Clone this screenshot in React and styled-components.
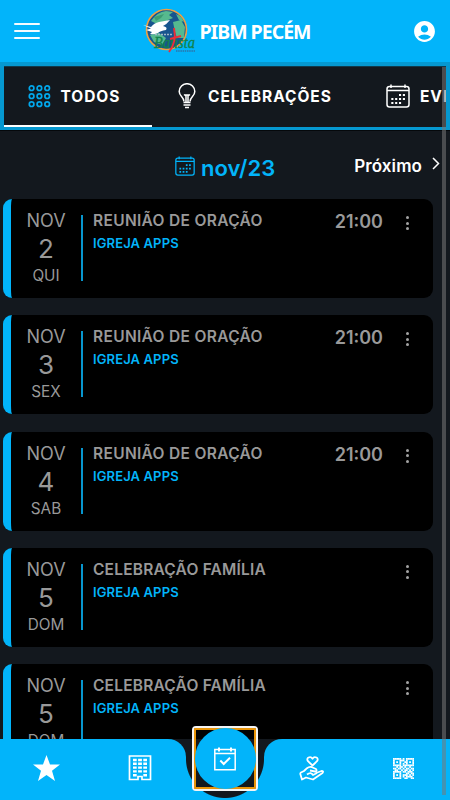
import React from 'react';
import styled, { createGlobalStyle } from 'styled-components';
import { MdAccountCircle } from 'react-icons/md';

const GlobalStyle = createGlobalStyle`
  * {
    box-sizing: border-box;
  }
  body {
    margin: 0;
    overflow: hidden;
    background: #13181e;
    font-family: Inter, 'Noto Sans', sans-serif;
  }
`;

const Screen = styled.div`
  position: relative;
  width: 450px;
  height: 800px;
  overflow: hidden;
  display: flex;
  flex-direction: column;
  background: #13181e;
`;

const Header = styled.header`
  flex: none;
  height: 62px;
  padding: 0 13px 0 14px;
  display: flex;
  align-items: center;
  justify-content: space-between;
  background: #02b4fa;
  color: white;
`;

const MenuButton = styled.div`
  width: 26px;
  height: 16px;
  display: flex;
  flex-direction: column;
  justify-content: space-between;
`;

const MenuLine = styled.span`
  height: 2px;
  border-radius: 1px;
  background: #f4fbff;
`;

const Brand = styled.div`
  display: flex;
  align-items: center;
  gap: 4px;
`;

const BrandName = styled.h1`
  margin: 2px 0 0;
  font-family: 'Noto Sans', sans-serif;
  font-size: 19.5px;
  line-height: 26px;
  font-weight: 700;
  letter-spacing: -1px;
  white-space: nowrap;
`;

const Tabs = styled.nav`
  flex: none;
  height: 69px;
  padding: 4px 4px 3px;
  background: #0598d1;
  border-bottom: 1px solid #05080b;
`;

const TabList = styled.div`
  height: 61px;
  display: flex;
  overflow: hidden;
  background: #13181e;
  border-top: 1px solid #10394b;
`;

const Tab = styled.div`
  flex: none;
  width: ${props => props.width}px;
  height: 60px;
  padding-left: ${props => props.inset}px;
  display: flex;
  align-items: center;
  gap: ${props => props.gap}px;
  color: white;
  font-size: 15.5px;
  font-weight: 700;
  letter-spacing: 0.95px;
  white-space: nowrap;
  border-bottom: 2px solid ${props => props.selected ? 'white' : 'transparent'};
`;

const Month = styled.div`
  flex: none;
  height: 68px;
  padding: 1px 10px 0 175px;
  display: flex;
  align-items: center;
  color: #02b4fa;
`;

const MonthName = styled.div`
  margin: 5px 0 0 6px;
  width: 76px;
  font-size: 22px;
  font-weight: 600;
  white-space: nowrap;
`;

const Next = styled.div`
  margin: 1px 0 0 auto;
  display: flex;
  align-items: center;
  gap: 9px;
  color: white;
  font-size: 17px;
  font-weight: 600;
  letter-spacing: 0.1px;

  svg {
    margin-top: -6px;
  }
`;

const List = styled.main`
  flex: 1;
  min-height: 0;
  overflow: hidden;
  padding-left: 3px;
`;

const Card = styled.article`
  width: 430px;
  height: 99px;
  margin-bottom: 17.3px;
  padding: 11px 18px 0 11px;
  display: flex;
  background: black;
  border-left: 8px solid #02b4fa;
  border-radius: 9px;
  color: #999;
`;

const DateBox = styled.div`
  width: 48px;
  display: flex;
  flex-direction: column;
  align-items: center;
`;

const DateName = styled.span`
  font-size: ${props => props.size}px;
  line-height: 22px;
`;

const Day = styled.span`
  font-size: 26px;
  line-height: 33px;
`;

const Divider = styled.div`
  width: 2px;
  height: 66px;
  margin: 5px 10px 0 11px;
  background: #0796ce;
`;

const Details = styled.div`
  flex: 1;
`;

const Title = styled.h2`
  margin: 1px 0 0;
  font-size: 15.5px;
  line-height: 20px;
  font-weight: 600;
  letter-spacing: ${props => props.spacing}px;
  white-space: nowrap;
`;

const Place = styled.div`
  margin-top: 3px;
  color: #02b4fa;
  font-size: 13px;
  line-height: 18px;
  font-weight: 600;
  letter-spacing: 0.12px;
`;

const Time = styled.time`
  margin-top: 1px;
  font-size: 18px;
  line-height: 22px;
  font-weight: 600;
`;

const More = styled.div`
  width: 3px;
  height: 14px;
  margin: 6px 6px 0 23px;
  display: flex;
  flex-direction: column;
  justify-content: space-between;
  align-items: center;
`;

const Dot = styled.span`
  width: 3px;
  height: 3px;
  border-radius: 50%;
  background: #a3a3a3;
`;

const BottomBar = styled.nav`
  flex: none;
  position: relative;
  height: 61px;
  display: grid;
  grid-template-columns: 186px 78px 186px;
  background: #13181e;
`;

const Side = styled.div`
  display: flex;
  align-items: center;
  justify-content: space-between;
  padding: ${props => props.right ? '0 36px 3px 35px' : '0 34px 3px 33px'};
  color: white;
  background: #02b4fa;
  border-radius: ${props => props.right ? '18px 0 0 0' : '0 18px 0 0'};
`;

const Notch = styled.div`
  height: 41px;
  margin-top: 20px;
  background: radial-gradient(circle at 39px 0, #13181e 38.5px, #02b4fa 39.5px);
`;

const FocusFrame = styled.div`
  position: absolute;
  left: 192px;
  bottom: 9px;
  width: 66px;
  height: 65px;
  display: flex;
  border: 2px solid #f5f5f5;
  border-radius: 4px;
  background: linear-gradient(#020304 11px, #13181e 11px);
`;

const FocusLine = styled.div`
  flex: 1;
  display: flex;
  border: 2px solid #e99509;
  border-radius: 1px;
`;

const AgendaButton = styled.div`
  flex: none;
  width: 61px;
  height: 61px;
  margin: -2px -1.5px;
  display: flex;
  align-items: center;
  justify-content: center;
  color: white;
  background: #02b4fa;
  border-radius: 50%;
`;

const Scrollbar = styled.div`
  position: absolute;
  left: 442px;
  top: 67px;
  width: 4px;
  height: 728px;
  background: rgba(120, 120, 120, 0.55);
`;

const Logo = () => (
  <svg width="54" height="46" viewBox="0 0 54 46">
    <circle cx="24.5" cy="21.5" r="20" fill="#18558e" stroke="#eda044" strokeWidth="1.6" />
    <path d="M9 13Q15 4 24 3L31 4 27 7 31 10 26 12 22 16 15 16zM31 14L39 12 43 19 42 30 35 30 33 24zM34 6Q40 8 42 14L37 12zM8 27L17 25 24 30 20 37 12 34z" fill="#56b98f" />
    <path d="M12 9L22 6 19 10 14 13z" fill="#3d9c72" />
    <path d="M1 17L9 19Q12 15 17 14L28 12Q25 16 21 18Q26 19 24 22Q18 23 16 25Q12 27 8 26L10 24 4 22 9 20.5z" fill="white" />
    <path d="M13 26.5H31" stroke="#a0b8c8" strokeWidth="1.3" strokeDasharray="2 1" />
    <text x="12" y="40" textLength="41" lengthAdjust="spacingAndGlyphs" fontFamily="Liberation Serif, serif" fontStyle="italic" fontSize="16" fill="#12824b" stroke="#12824b" strokeWidth="0.3">Batista</text>
    <path d="M32 20Q35 34 27 44M28 31L39 28" fill="none" stroke="#ed2e38" strokeWidth="1.9" />
    <path d="M34 43H53" stroke="#2c73a9" strokeWidth="1.3" strokeDasharray="1.5 0.7" />
  </svg>
);

const GridIcon = () => (
  <svg width="23" height="23" viewBox="0 0 23 23" fill="none" stroke="#02a8ed" strokeWidth="1.7">
    {[3.2, 11.2, 19.2].map(y => [3.6, 11.4, 19.2].map(x => <circle key={`${x}-${y}`} cx={x} cy={y} r="2.3" />))}
  </svg>
);

const BulbIcon = () => (
  <svg width="18" height="26" viewBox="0 0 18 26" fill="none" stroke="white" strokeWidth="1.5">
    <path d="M6 18.5C6 14 1.2 13.5 1.2 8.5A7.7 7.7 0 0 1 16.8 8.5C16.8 13.5 12 14 12 18.5" />
    <path d="M8 19V13L6 11.5M10 19V13L12 11.5M6.5 12H11.5M5.5 19.5H12.5M5.5 22H12.5M7 24.5H11" />
  </svg>
);

const CalendarIcon = ({ size }) => (
  <svg width={size} height={size} viewBox="0 0 24 24" fill="none" stroke="currentColor" strokeWidth="1.5">
    <rect x="1" y="2.5" width="22" height="20.5" rx="2.5" />
    <path d="M1 6.5H23M5 0.5V4M19 0.5V4" />
    <path d="M13 11H20M5.3 15H20M5.3 19H16.5" strokeWidth="2.1" strokeDasharray="2.1 1.75" />
  </svg>
);

const StarIcon = () => (
  <svg width="27" height="26" viewBox="0 0 27 26" fill="currentColor">
    <path d="M13.5 0L17 9.5H27L19 15.8 22 26 13.5 20 5 26 8 15.8 0 9.5H10z" />
  </svg>
);

const BuildingIcon = () => (
  <svg width="24" height="26" viewBox="0 0 24 26" fill="none" stroke="currentColor" strokeWidth="1.7">
    <path d="M1.5 1H22.5V24.5H14V21.5H10V24.5H1.5z" />
    {[5, 8.8, 12.6, 16.4, 20.2].map(y => (
      <path key={y} d={y > 20 ? `M5 ${y}H8.7M15.3 ${y}H19` : `M5 ${y}H8.7M10.1 ${y}H13.9M15.3 ${y}H19`} strokeWidth="2.4" />
    ))}
  </svg>
);

const AgendaIcon = () => (
  <svg width="22" height="24" viewBox="0 0 22 24" fill="none" stroke="currentColor" strokeWidth="1.5">
    <path d="M0.8 2.5H21.2V22.8H0.8zM0.8 6.5H21.2" />
    <path d="M5 0.5V4.5M17 0.5V4.5" strokeWidth="2" />
    <path d="M6.3 13.5L9.7 17 16 10.7" strokeWidth="2" />
  </svg>
);

const GiveIcon = () => (
  <svg width="25" height="25" viewBox="0 0 25 25" fill="none" stroke="currentColor" strokeWidth="1.8" strokeLinejoin="round">
    <path d="M13.5 9.5L9 5.2C6.5 2 11.5-.5 13.5 2.8C15.5-.5 20.5 2 18 5.2z" />
    <path d="M1 17L5 15 8 12.2Q10 10.5 12.5 11L17 13Q18.5 15 16 15.5L11 14.5M17 17L22.5 15Q25 15 23.5 17L14 23.5 7 21.5 3 23.5 1 17M8 18.5Q12 15.5 14 19L18 17" />
  </svg>
);

// each string is one row of modules
const QR_ROWS = [
  '1111101011111',
  '1000111010001',
  '1010100110101',
  '1000101010001',
  '1111101111111',
  '0010110100100',
  '1101101011011',
  '0110010110101',
  '1111101101110',
  '1000100011011',
  '1010101110101',
  '1000101011110',
  '1111100110011',
];

const QrIcon = () => (
  <svg width="21" height="21" viewBox="0 0 13 13" fill="currentColor">
    {QR_ROWS.map((row, y) => row.split('').map((bit, x) => (
      bit === '1' && <rect key={`${x}-${y}`} x={x} y={y} width="1.1" height="1.1" />
    )))}
  </svg>
);

const events = [
  { day: 2, week: 'QUI', title: 'REUNIÃO DE ORAÇÃO', time: '21:00' },
  { day: 3, week: 'SEX', title: 'REUNIÃO DE ORAÇÃO', time: '21:00' },
  { day: 4, week: 'SAB', title: 'REUNIÃO DE ORAÇÃO', time: '21:00' },
  { day: 5, week: 'DOM', title: 'CELEBRAÇÃO FAMÍLIA' },
  { day: 5, week: 'DOM', title: 'CELEBRAÇÃO FAMÍLIA' },
];

const Event = ({ day, week, title, time }) => (
  <Card>
    <DateBox>
      <DateName size={18}>NOV</DateName>
      <Day>{day}</Day>
      <DateName size={15.3}>{week}</DateName>
    </DateBox>
    <Divider />
    <Details>
      <Title spacing={time ? 0.33 : 0.2}>{title}</Title>
      <Place>IGREJA APPS</Place>
    </Details>
    {time && <Time>{time}</Time>}
    <More>
      <Dot />
      <Dot />
      <Dot />
    </More>
  </Card>
);

const App = () => (
  <>
    <GlobalStyle />
    <Screen>
      <Header>
        <MenuButton>
          <MenuLine />
          <MenuLine />
          <MenuLine />
        </MenuButton>
        <Brand>
          <Logo />
          <BrandName>PIBM PECÉM</BrandName>
        </Brand>
        <MdAccountCircle size={25} />
      </Header>
      <Tabs>
        <TabList>
          <Tab selected width={148} inset={24} gap={9.5}>
            <GridIcon />
            TODOS
          </Tab>
          <Tab width={207} inset={26} gap={12}>
            <BulbIcon />
            CELEBRAÇÕES
          </Tab>
          <Tab width={150} inset={27} gap={10}>
            <CalendarIcon size={24} />
            EVENTOS
          </Tab>
        </TabList>
      </Tabs>
      <Month>
        <CalendarIcon size={20} />
        <MonthName>nov/23</MonthName>
        <Next>
          Próximo
          <svg width="9" height="13" viewBox="0 0 9 13" fill="none" stroke="white" strokeWidth="1.5">
            <path d="M2 1L7.5 6.5 2 12" />
          </svg>
        </Next>
      </Month>
      <List>
        {events.map((event, i) => <Event key={i} {...event} />)}
      </List>
      <BottomBar>
        <Side>
          <StarIcon />
          <BuildingIcon />
        </Side>
        <Notch />
        <Side right>
          <GiveIcon />
          <QrIcon />
        </Side>
        <FocusFrame>
          <FocusLine>
            <AgendaButton>
              <AgendaIcon />
            </AgendaButton>
          </FocusLine>
        </FocusFrame>
      </BottomBar>
      <Scrollbar />
    </Screen>
  </>
);

export default App;
